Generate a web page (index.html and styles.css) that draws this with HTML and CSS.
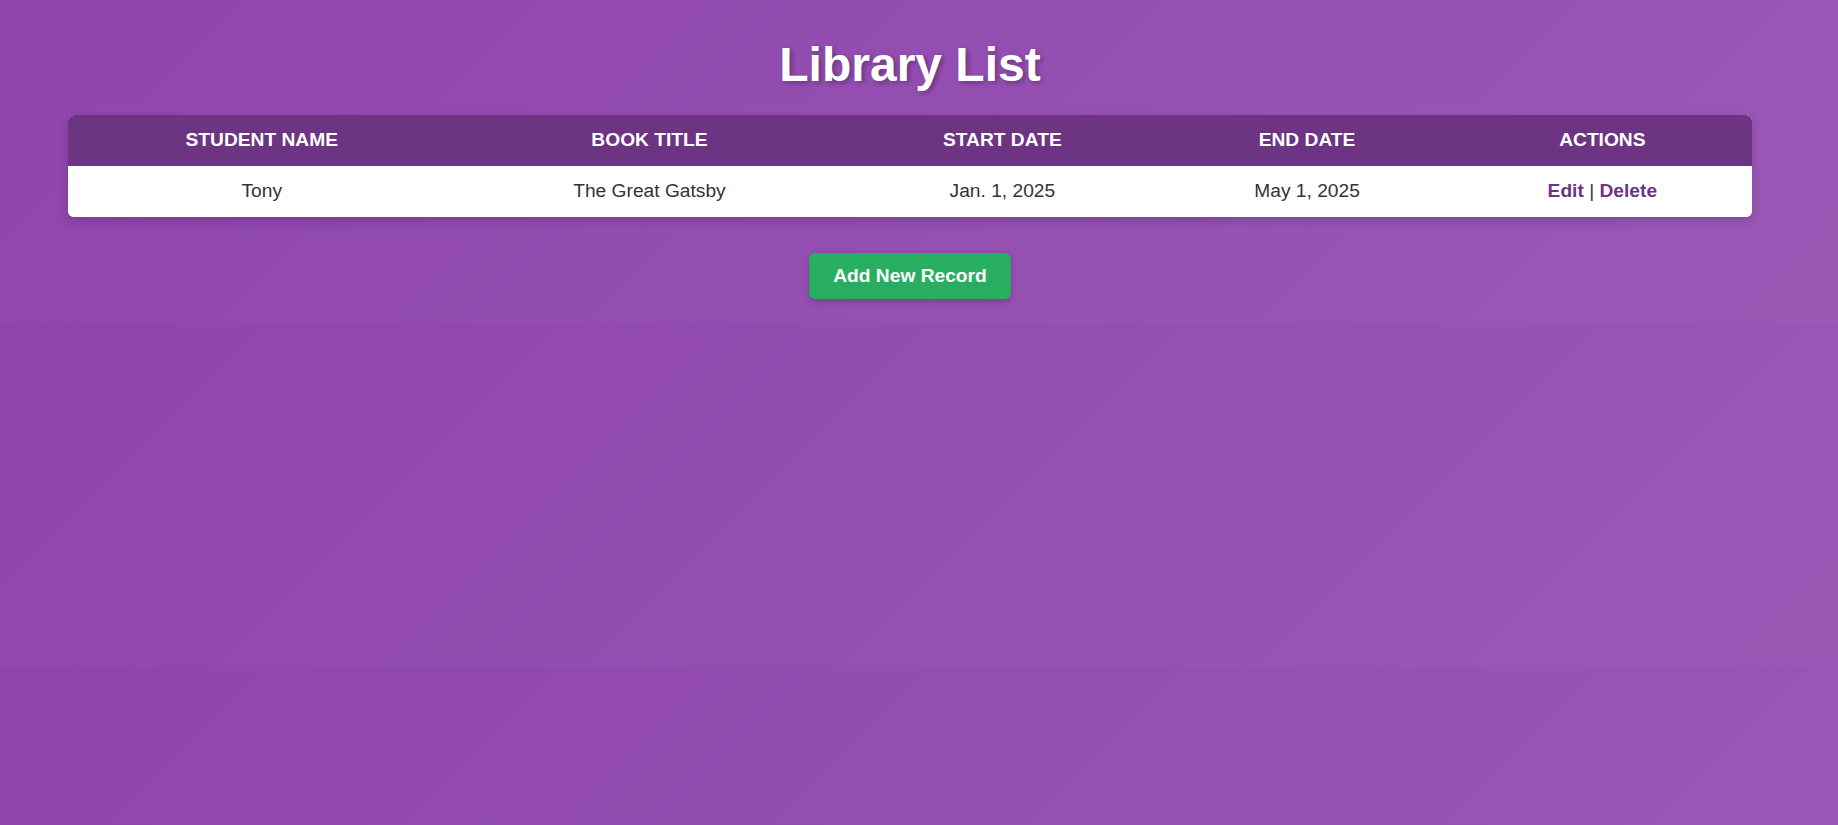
FILE: index.html
```html
<!DOCTYPE html>
<html lang="en">
<head>
<meta charset="utf-8">
<title>Library List</title>
<link rel="stylesheet" href="styles.css">
</head>
<body>
<div class="page">
  <h1 class="title">Library List</h1>
  <div class="table-wrap">
    <table class="records">
      <thead>
        <tr>
          <th>Student Name</th>
          <th>Book Title</th>
          <th>Start Date</th>
          <th>End Date</th>
          <th>Actions</th>
        </tr>
      </thead>
      <tbody>
        <tr>
          <td>Tony</td>
          <td>The Great Gatsby</td>
          <td>Jan. 1, 2025</td>
          <td>May 1, 2025</td>
          <td><a class="action" href="#">Edit</a> | <a class="action" href="#">Delete</a></td>
        </tr>
      </tbody>
    </table>
  </div>
  <div class="button-row">
    <a class="btn-add" href="#">Add New Record</a>
  </div>
</div>
</body>
</html>
```
FILE: styles.css
```css
html {
  background: linear-gradient(135deg, #8e44ad 0%, #9b59b6 100%);
  background-size: 100% 343px;
  background-position: 0 -20px;
  background-repeat: repeat;
  min-height: 100%;
}

body {
  margin: 0;
  font-family: "Liberation Sans", Arial, sans-serif;
  font-size: 19.2px;
  color: #333;
}

.page {
  padding: 37px 86px 24px 68px;
}

.title {
  margin: 0 0 23px;
  text-align: center;
  color: #fff;
  font-size: 48px;
  font-weight: bold;
  line-height: normal;
  text-shadow: 2.4px 2.4px 4.8px rgba(0, 0, 0, 0.3);
}

.table-wrap {
  border-radius: 6px;
  overflow: hidden;
  background: #fff;
  box-shadow: 0 4.8px 9.6px rgba(0, 0, 0, 0.15);
}

.records {
  width: 100%;
  border-collapse: collapse;
  border-spacing: 0;
}

.records th,
.records td {
  padding: 14.4px 18px;
  text-align: center;
  line-height: normal;
}

.records th {
  background: #6c3483;
  color: #fff;
  font-weight: bold;
  text-transform: uppercase;
}

.records td {
  background: #fff;
  color: #333;
}

.action {
  color: #6c3483;
  font-weight: bold;
  text-decoration: none;
}

.button-row {
  margin-top: 36px;
  text-align: center;
}

.btn-add {
  display: inline-block;
  padding: 12px 24px;
  background: #27ae60;
  color: #fff;
  font-weight: bold;
  text-decoration: none;
  border-radius: 6px;
  line-height: normal;
  box-shadow: 0 2.4px 6px rgba(0, 0, 0, 0.2);
}
```
